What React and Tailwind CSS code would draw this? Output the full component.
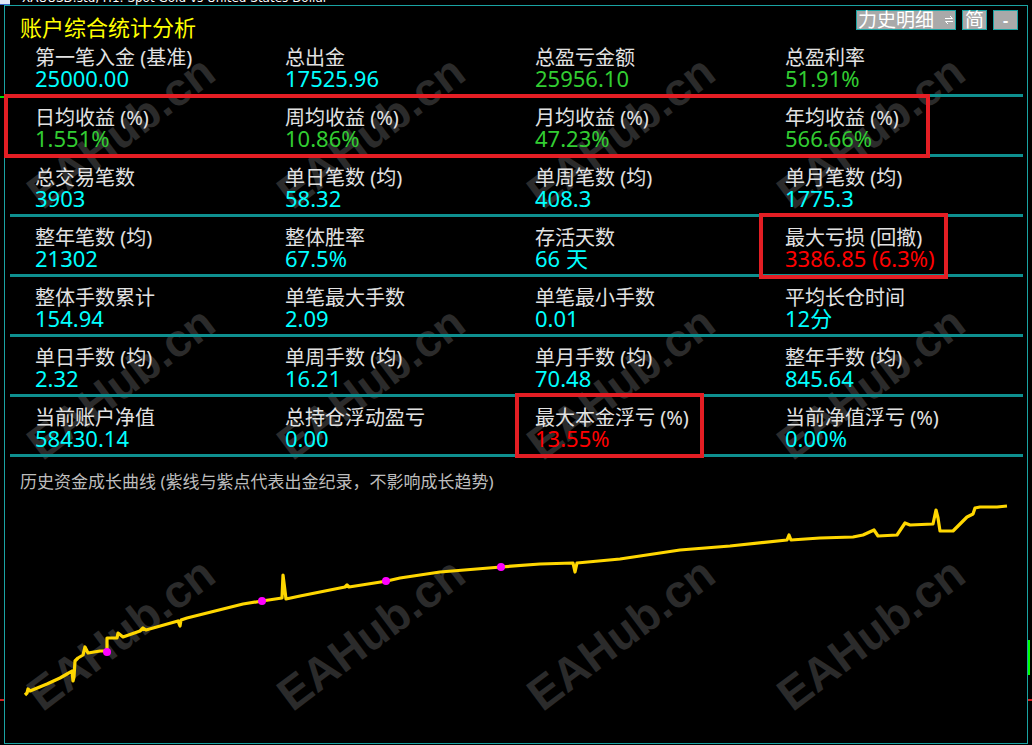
import React from 'react'

const font = { fontFamily: '"Noto Sans", "Noto Sans CJK SC", sans-serif' }

const C = 'text-[#00ffff]'
const G = 'text-[#32cd32]'
const R = 'text-[#ff0000]'

const rows = [
  [['第一笔入金 (基准)', '25000.00', C], ['总出金', '17525.96', C], ['总盈亏金额', '25956.10', G], ['总盈利率', '51.91%', G]],
  [['日均收益 (%)', '1.551%', G], ['周均收益 (%)', '10.86%', G], ['月均收益 (%)', '47.23%', G], ['年均收益 (%)', '566.66%', G]],
  [['总交易笔数', '3903', C], ['单日笔数 (均)', '58.32', C], ['单周笔数 (均)', '408.3', C], ['单月笔数 (均)', '1775.3', C]],
  [['整年笔数 (均)', '21302', C], ['整体胜率', '67.5%', C], ['存活天数', '66 天', C], ['最大亏损 (回撤)', '3386.85 (6.3%)', R]],
  [['整体手数累计', '154.94', C], ['单笔最大手数', '2.09', C], ['单笔最小手数', '0.01', C], ['平均长仓时间', '12分', C]],
  [['单日手数 (均)', '2.32', C], ['单周手数 (均)', '16.21', C], ['单月手数 (均)', '70.48', C], ['整年手数 (均)', '845.64', C]],
  [['当前账户净值', '58430.14', C], ['总持仓浮动盈亏', '0.00', C], ['最大本金浮亏 (%)', '13.55%', R], ['当前净值浮亏 (%)', '0.00%', C]],
]

// watermark centres, tiled every 250px
const marks = [
  'left-[116px] top-[126px]', 'left-[366px] top-[126px]', 'left-[616px] top-[126px]', 'left-[866px] top-[126px]',
  'left-[116px] top-[377px]', 'left-[366px] top-[377px]', 'left-[616px] top-[377px]', 'left-[866px] top-[377px]',
  'left-[116px] top-[628px]', 'left-[366px] top-[628px]', 'left-[616px] top-[628px]', 'left-[866px] top-[628px]',
]

const curve = [
  [25, 694], [27, 692], [28, 688], [30, 690], [47, 683], [60, 677], [67, 673], [72, 670], [73, 680], [74, 676],
  [75, 660], [78, 657], [83, 654], [85, 646], [88, 652], [100, 650], [107, 650], [107, 637], [117, 637], [118, 632],
  [123, 636], [140, 630], [143, 627], [146, 629], [178, 620], [180, 625], [181, 619], [187, 617], [243, 603],
  [262, 600], [282, 597], [283, 574], [286, 598], [300, 595], [330, 589], [345, 586], [347, 584], [349, 586],
  [387, 580], [400, 577], [440, 571], [501, 566], [540, 563], [573, 562], [575, 571], [577, 562], [620, 558],
  [680, 549], [730, 545], [787, 539], [789, 534], [791, 539], [820, 537], [853, 536], [863, 534], [874, 529],
  [878, 535], [897, 534], [905, 522], [910, 524], [933, 523], [936, 509], [938, 517], [940, 530], [953, 530],
  [963, 520], [967, 516], [973, 513], [975, 507], [980, 506], [997, 506], [1007, 505],
]

const dots = [[107, 651], [262, 600], [386, 580], [501, 566]]

function Stat({ label, value, color }) {
  return (
    <div className="flex flex-col">
      <span className="text-[20px] leading-[21px] text-[#e2e2e2] whitespace-nowrap">{label}</span>
      <span className={`text-[22px] leading-[20px] whitespace-nowrap ${color}`}>{value}</span>
    </div>
  )
}

export default function App() {
  return (
    <div className="relative w-[1032px] h-[745px] bg-black overflow-hidden" style={font}>
      {/* chart window caption, mostly cut off */}
      <div className="h-[5px] overflow-hidden flex items-start">
        <div className="w-[10px] h-[5px] bg-[#dfe6f5] border-b border-[#3a64c8]" />
        <span className="ml-[12px] -mt-[8px] text-[12px] leading-[13px] text-white whitespace-nowrap" style={{ fontFamily: '"DejaVu Sans", sans-serif' }}>
          XAUUSD.std, H1:  Spot Gold vs United States Dollar
        </span>
      </div>

      {/* MT4 edge ticks */}
      <div className="absolute left-0 top-[96px] w-[4px] h-[2px] bg-[#00e000]" />
      <div className="absolute left-0 top-[699px] w-[4px] h-[2px] bg-[#d02020]" />
      <div className="absolute left-[1028px] top-[640px] w-[2px] h-[35px] bg-[#00ff00]" />
      <div className="absolute left-[1028px] top-[699px] w-[4px] h-[2px] bg-[#d02020]" />

      <div className="relative ml-[4px] w-[1024px] h-[739px] border border-[#1aa3a3] flex flex-col">
        {/* watermark */}
        {marks.map((m) => (
          <span
            key={m}
            className={`absolute ${m} -translate-x-1/2 -translate-y-1/2 -rotate-[37deg] text-[46px] font-bold text-[#2b2b2b] whitespace-nowrap pointer-events-none`}
            style={{ fontFamily: '"Liberation Sans", sans-serif' }}
          >
            EAHub.cn
          </span>
        ))}

        <div className="relative h-[31px] flex items-start justify-between">
          <span className="ml-[15px] mt-[7px] text-[22px] leading-[28px] text-[#ffff00] whitespace-nowrap">账户综合统计分析</span>
          <div className="flex gap-[6px] mt-[4px] mr-[9px]">
            <div className="w-[100px] h-[20px] bg-[#a9a9a9] border border-[#1aa3a3] flex items-center justify-between pl-[1px] pr-[2px]">
              <span className="text-[19px] leading-[18px] text-white whitespace-nowrap">力史明细</span>
              <svg width="8" height="10" viewBox="0 0 8 10" fill="none" stroke="white" strokeWidth="1">
                <path d="M0 3.5h7.5L5 1" />
                <path d="M8 6.5H0.5L3 9" />
              </svg>
            </div>
            <div className="w-[25px] h-[20px] bg-[#a9a9a9] border border-[#1aa3a3] flex items-center justify-center">
              <span className="text-[19px] leading-[18px] text-white">简</span>
            </div>
            <div className="w-[25px] h-[20px] bg-[#a9a9a9] border border-[#1aa3a3] flex items-center justify-center">
              <span className="text-[16px] leading-[16px] text-white font-bold">-</span>
            </div>
          </div>
        </div>

        {rows.map((row, i) => (
          <div key={i} className="relative h-[60px] flex flex-col">
            <div className="pt-[10px] pl-[30px] grid grid-cols-[250px_250px_250px_250px]">
              {row.map(([l, v, c]) => (
                <Stat key={l} label={l} value={v} color={c} />
              ))}
            </div>
            <div className="mt-auto ml-[5px] mr-[4px] h-[3px] bg-[#0e8f8f]" />
          </div>
        ))}

        <div className="relative flex-1 flex flex-col">
          <span className="ml-[15px] mt-[14px] text-[17px] leading-[22px] text-[#bdbdbd] whitespace-nowrap">
            历史资金成长曲线 (紫线与紫点代表出金纪录，不影响成长趋势)
          </span>
          <svg className="block mt-auto" width="1022" height="249" viewBox="5 493 1022 249">
            <polyline
              points={curve.map((p) => p.join(',')).join(' ')}
              fill="none"
              stroke="#ffd700"
              strokeWidth="3.2"
              strokeLinejoin="round"
            />
            {dots.map(([x, y]) => (
              <circle key={x} cx={x} cy={y} r="4" fill="#ff00ff" />
            ))}
          </svg>
        </div>

        {/* red annotation boxes */}
        <div className="absolute left-[-1px] top-[88px] w-[926px] h-[64px] border-4 border-[#e31e24] pointer-events-none" />
        <div className="absolute left-[754px] top-[207px] w-[189px] h-[66px] border-4 border-[#e31e24] pointer-events-none" />
        <div className="absolute left-[510px] top-[387px] w-[189px] h-[65px] border-4 border-[#e31e24] pointer-events-none" />
      </div>
    </div>
  )
}
